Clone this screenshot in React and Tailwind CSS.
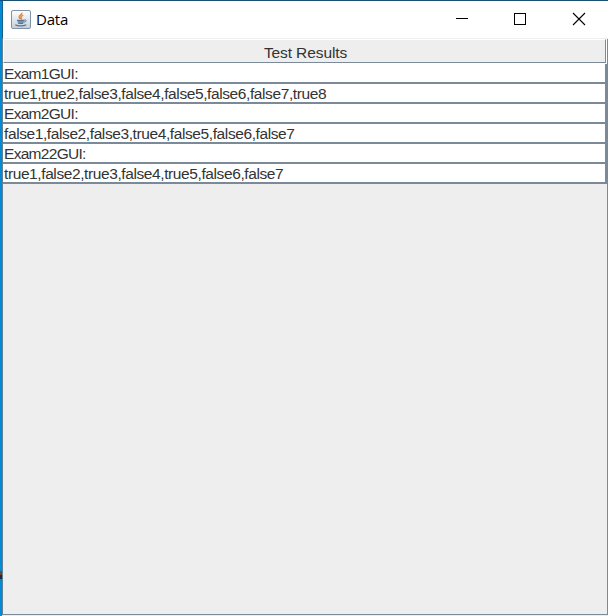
const rows = [
  { text: "Exam1GUI:", heading: true },
  { text: "true1,true2,false3,false4,false5,false6,false7,true8" },
  { text: "Exam2GUI:", heading: true },
  { text: "false1,false2,false3,true4,false5,false6,false7" },
  { text: "Exam22GUI:", heading: true },
  { text: "true1,false2,true3,false4,true5,false6,false7" },
];

function JavaIcon() {
  return (
    <svg width="20" height="19" viewBox="0 0 20 19" className="shrink-0">
      <defs>
        <linearGradient id="tile" x1="0" y1="0" x2="0" y2="1">
          <stop offset="0" stopColor="#ffffff" />
          <stop offset="1" stopColor="#c5ced8" />
        </linearGradient>
      </defs>
      <rect x="0.5" y="0.5" width="19" height="18" rx="1.5" fill="url(#tile)" stroke="#8192a5" />
      <path d="M10.8 2.8c.5 2-3.2 2.6-2.6 4.3.2.8 1 1.2 1 2M12.2 5.2c-1.6.8-2.6 1.5-2 2.6.4.6.4 1-.2 1.6" fill="none" stroke="#e8843a" strokeWidth="1.5" />
      <path d="M6 10.3h7.5M6.5 11.8h6.3M7.2 13.3h5" fill="none" stroke="#54779b" strokeWidth="1.3" />
      <path d="M13.5 10c2.2-.5 2.4 1.6-.7 2.3" fill="none" stroke="#54779b" />
      <path d="M4.3 14.8c2 1.5 8.5 1.5 11 0" fill="none" stroke="#54779b" strokeWidth="1.3" />
    </svg>
  );
}

function TitleBar() {
  return (
    <header className="flex h-[37px] shrink-0 items-center bg-white pl-2">
      <JavaIcon />
      <h1 className="mb-0.5 ml-[5px] font-['Open_Sans',sans-serif] text-[15px] leading-5 tracking-[-0.2px] text-black">Data</h1>
      <div className="ml-auto flex h-full items-center">
        <svg width="58" height="37" fill="none" stroke="black" shapeRendering="crispEdges">
          <path d="M23 17.5h12" />
        </svg>
        <svg width="59" height="37" fill="none" stroke="black" shapeRendering="crispEdges">
          <rect x="23.5" y="12.5" width="11" height="11" />
        </svg>
        <svg width="58" height="37" fill="none" stroke="black" strokeWidth="1.1">
          <path d="M23 12l12 12M35 12L23 24" />
        </svg>
      </div>
    </header>
  );
}

function Row({ text, heading }) {
  return (
    <div className="h-5 border-b-2 border-[#7a8a99] bg-white pl-px">
      <p className={heading ? "h-[18px] text-[15.5px] leading-[19px] tracking-[-0.7px]" : "h-[18px] text-[15.5px] leading-[19px] tracking-[-0.4px]"}>
        {text}
      </p>
    </div>
  );
}

export default function App() {
  return (
    <div className="flex h-[616px] w-[608px] overflow-hidden border-t border-[#1a4f74] bg-[#eeeeee]">
      <div className="flex w-0.5 shrink-0 flex-col bg-[#008bd6] pt-[570px]">
        <div className="h-1 bg-[#6b4a32]" />
        <div className="h-1 bg-[#1c2b38]" />
      </div>
      <div className="mb-px flex w-px shrink-0 flex-col bg-[#647f94]">
        <div className="h-[37px] bg-[#1b5d86]" />
      </div>
      <main className="flex min-w-0 flex-1 flex-col pb-px">
        <TitleBar />
        <div className="h-px shrink-0 bg-[#eeeeee]" />
        <section className="flex flex-1 flex-col border-r border-b border-[#7a8a99] font-['Liberation_Sans',Arial,sans-serif] text-[#333333]">
          <div className="h-[25px] border-r border-white bg-white pb-px">
            <button className="flex h-6 w-full items-center justify-center border border-t-white border-r-[#7a8a99] border-b-[#7a8a99] border-l-white bg-[#eeeeee] pt-1 pl-0.5 text-[15.5px] leading-[18px] tracking-[-0.1px]">
              Test Results
            </button>
          </div>
          <div className="border-r-2 border-[#7a8a99]">
            {rows.map((row) => (
              <Row key={row.text} {...row} />
            ))}
          </div>
        </section>
      </main>
    </div>
  );
}
